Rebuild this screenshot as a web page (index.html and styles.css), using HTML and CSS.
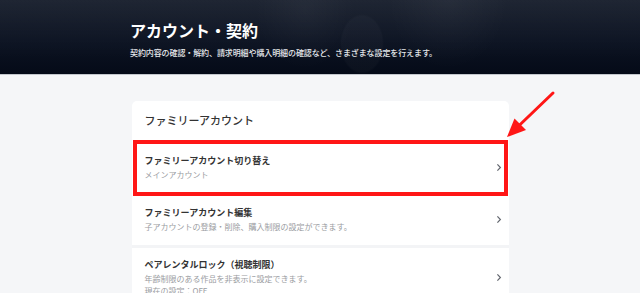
FILE: index.html
```html
<!DOCTYPE html>
<html lang="ja">
<head>
<meta charset="utf-8">
<title>アカウント・契約</title>
<link rel="stylesheet" href="styles.css">
</head>
<body>
<header class="hero">
  <div class="hero-inner">
    <h1 class="hero-title">アカウント・契約</h1>
    <p class="hero-desc">契約内容の確認・解約、請求明細や購入明細の確認など、さまざまな設定を行えます。</p>
  </div>
</header>
<main class="main">
  <section class="card">
    <h2 class="card-title">ファミリーアカウント</h2>
    <ul class="list">
      <li class="item item--marked">
        <div class="item-text">
          <div class="item-title">ファミリーアカウント切り替え</div>
          <div class="item-sub">メインアカウント</div>
        </div>
        <svg class="chev" width="6" height="9" viewBox="0 0 6 9"><polyline points="1.4,1.3 4.4,4.5 1.4,7.7" fill="none" stroke="#62666e" stroke-width="1.2"/></svg>
      </li>
      <li class="item">
        <div class="item-text">
          <div class="item-title">ファミリーアカウント編集</div>
          <div class="item-sub">子アカウントの登録・削除、購入制限の設定ができます。</div>
        </div>
        <svg class="chev" width="6" height="9" viewBox="0 0 6 9"><polyline points="1.4,1.3 4.4,4.5 1.4,7.7" fill="none" stroke="#62666e" stroke-width="1.2"/></svg>
      </li>
      <li class="item">
        <div class="item-text">
          <div class="item-title">ペアレンタルロック（視聴制限）</div>
          <div class="item-sub">年齢制限のある作品を非表示に設定できます。</div>
          <div class="item-sub">現在の設定：OFF</div>
        </div>
        <svg class="chev" width="6" height="9" viewBox="0 0 6 9"><polyline points="1.4,1.3 4.4,4.5 1.4,7.7" fill="none" stroke="#62666e" stroke-width="1.2"/></svg>
      </li>
    </ul>
  </section>
</main>
<svg class="arrow" width="640" height="293" viewBox="0 0 640 293">
  <line x1="553" y1="93" x2="516" y2="128.5" stroke="#ff1616" stroke-width="3" stroke-linecap="round"/>
  <polygon points="507,137 514.5,118.5 526,130" fill="#ff1616"/>
</svg>
</body>
</html>
```
FILE: styles.css
```css
* { box-sizing: border-box; }
html, body { margin: 0; padding: 0; }
body {
  background: #f5f6f8;
  font-family: "Noto Sans CJK JP", "Noto Sans", sans-serif;
  color: #333;
  height: 293px;
  overflow: hidden;
  position: relative;
}
.hero {
  height: 75px;
  border-bottom: 1px solid #c3c7cd;
  background-color: #08101f;
  background-image:
    radial-gradient(ellipse 22px 30px at 362px 44px, rgba(255,255,255,0.025), rgba(255,255,255,0.025) 92%, transparent 100%),
    linear-gradient(to bottom, rgba(255,255,255,0.04), rgba(255,255,255,0) 80%),
    radial-gradient(ellipse 60px 70px at 448px 0px, rgba(255,255,255,0.04), transparent 100%),
    radial-gradient(ellipse 50px 60px at 305px 10px, rgba(255,255,255,0.035), transparent 100%),
    linear-gradient(to bottom, #161d2b 0%, #0c1322 55%, #050b18 100%);
}
.hero-inner {
  padding: 20px 0 0 130px;
}
.hero-title {
  margin: 0;
  font-size: 16px;
  line-height: 20px;
  font-weight: 700;
  color: #ffffff;
}
.hero-desc {
  margin: 7px 0 0;
  font-size: 8px;
  line-height: 12px;
  font-weight: 500;
  letter-spacing: -0.1px;
  color: #e6e8ec;
}
.main {
  padding-top: 26px;
}
.card {
  width: 377px;
  margin: 0 auto;
  background: #ffffff;
  border-radius: 5px;
}
.card-title {
  margin: 0;
  padding: 11px 13px 12px;
  font-size: 11px;
  line-height: 16px;
  font-weight: 500;
  color: #333;
}
.list {
  list-style: none;
  margin: 0;
  padding: 0;
}
.item {
  display: flex;
  align-items: center;
  padding: 10px 7px 12px 13px;
  border-top: 3px solid #f3f4f6;
}
.item--marked {
  position: relative;
  border-top: 0;
  padding-top: 14px;
  padding-bottom: 15px;
}
.item--marked::after {
  content: "";
  position: absolute;
  top: 0;
  bottom: 0;
  left: 1px;
  right: 1px;
  border: 4px solid #ff1616;
}
.item--marked + .item { border-top: 0; }
.item-text { flex: 1; }
.item-title {
  font-size: 9px;
  line-height: 13px;
  font-weight: 700;
  color: #333;
}
.item-sub {
  font-size: 8px;
  line-height: 12px;
  color: #9a9ca1;
}
.item-title + .item-sub { margin-top: 2px; }
.chev { flex: none; display: block; }
.arrow {
  position: absolute;
  left: 0;
  top: 0;
  pointer-events: none;
}
```
